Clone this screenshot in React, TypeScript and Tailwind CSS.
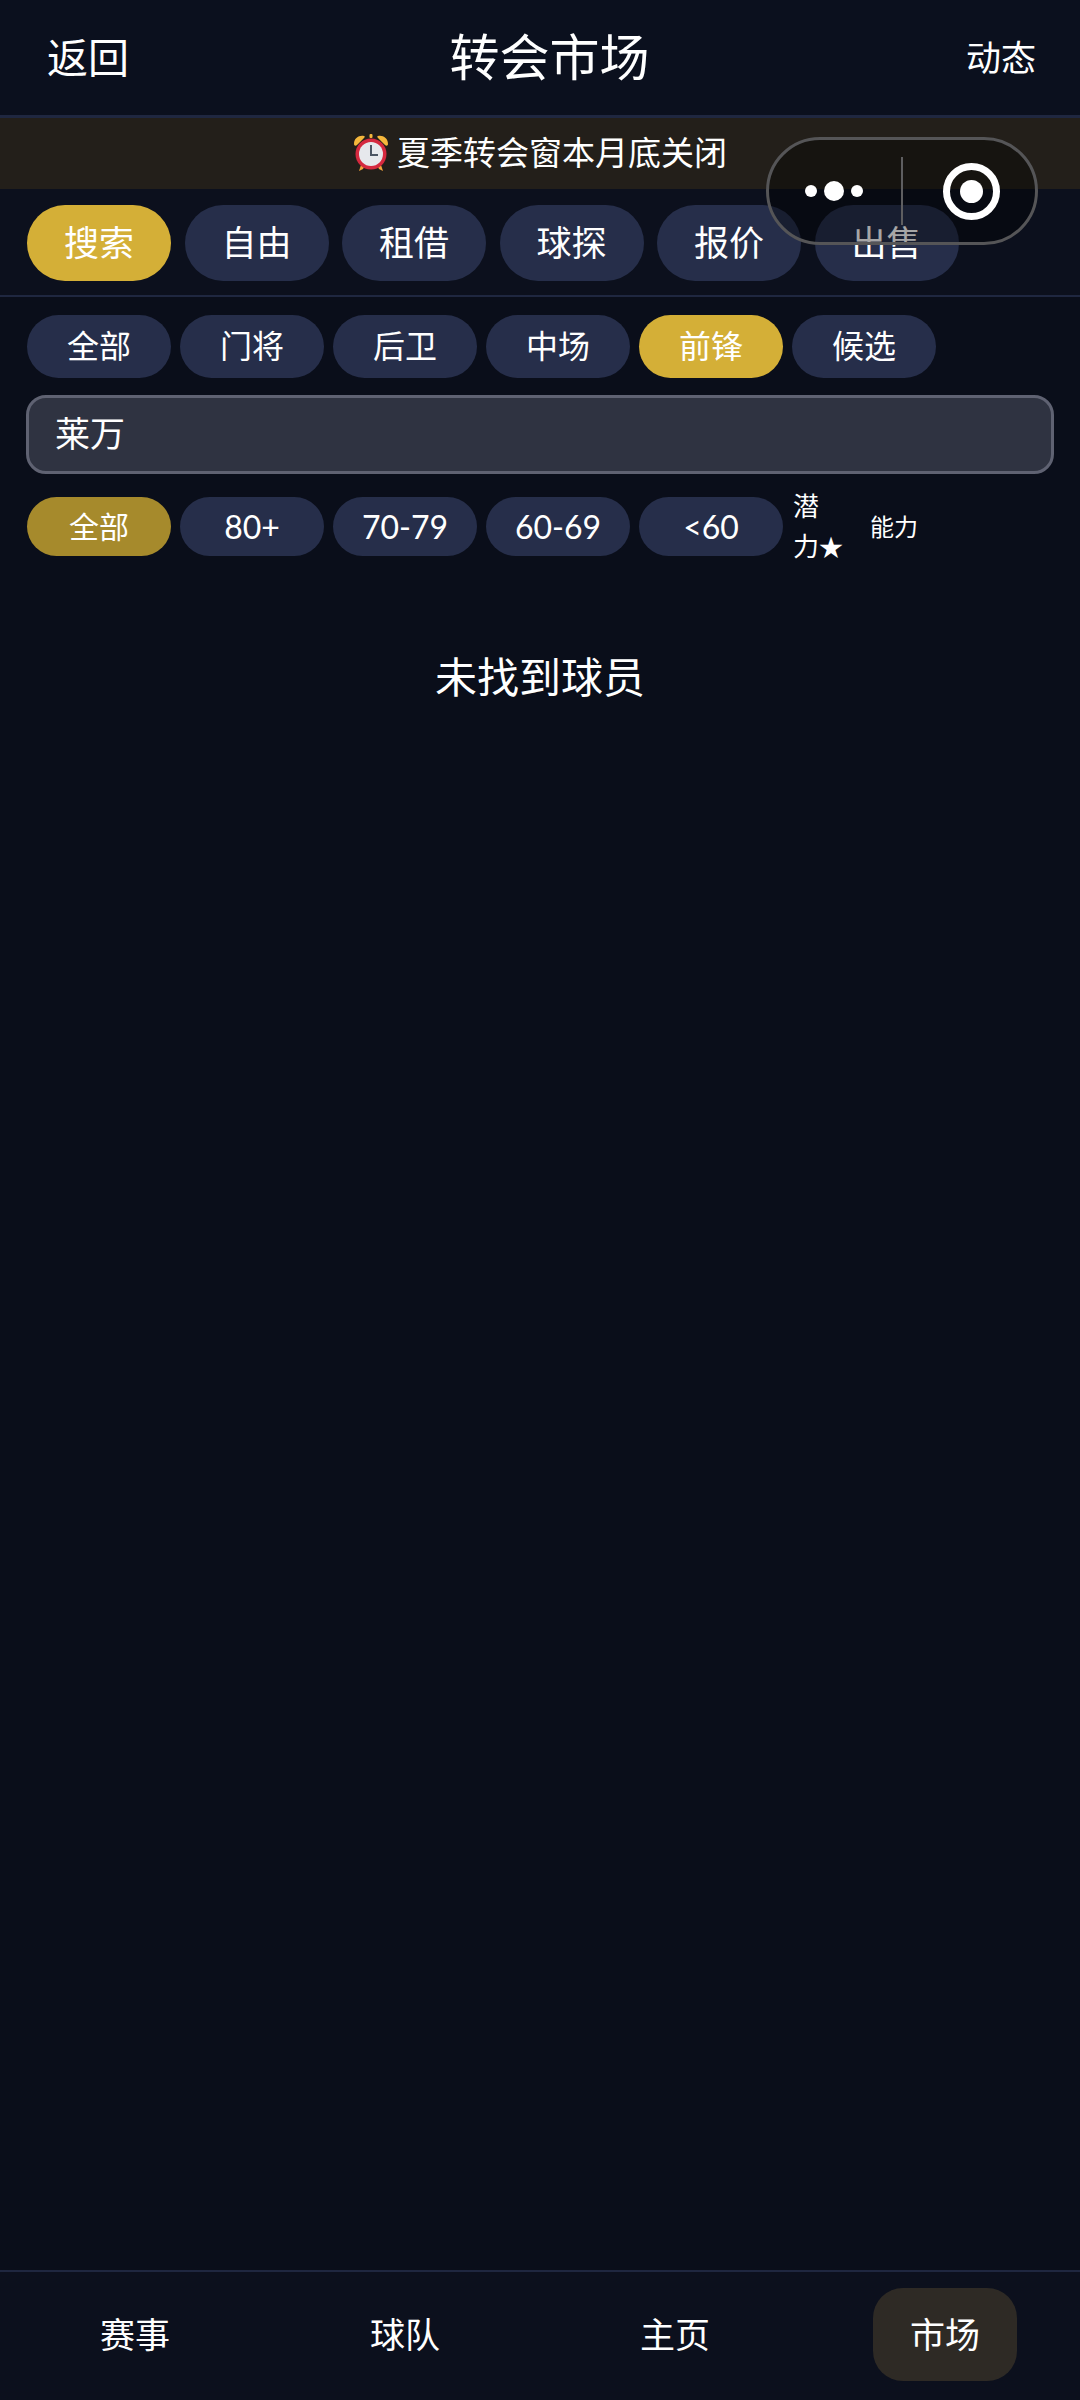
const tabs = ["搜索", "自由", "租借", "球探", "报价", "出售"];
const positions = ["全部", "门将", "后卫", "中场", "前锋", "候选"];
const ratings = ["全部", "80+", "70-79", "60-69", "<60"];
const navItems = ["赛事", "球队", "主页", "市场"];

function AlarmClock() {
  return (
    <svg width="36" height="38" viewBox="0 0 36 38" className="shrink-0">
      <path d="M1 10 C1 4 6 1 11 2 C12 2 12 3 11 4 L4 11 C3 12 1 12 1 10 Z" fill="#f5b73c" />
      <path d="M35 10 C35 4 30 1 25 2 C24 2 24 3 25 4 L32 11 C33 12 35 12 35 10 Z" fill="#f5b73c" />
      <rect x="16.5" y="0" width="3" height="4" rx="1" fill="#f5b73c" />
      <path d="M8 31 L6 37 L10 35 L11 33 Z" fill="#f5a53c" />
      <path d="M28 31 L30 37 L26 35 L25 33 Z" fill="#f5a53c" />
      <circle cx="18" cy="20" r="15.5" fill="#d5293f" />
      <circle cx="18" cy="20" r="12" fill="#e6e8ec" />
      <path d="M18 11 V21 H25" stroke="#4b5563" strokeWidth="2" fill="none" />
    </svg>
  );
}

function Capsule() {
  return (
    <div className="absolute left-[766px] top-[137px] w-[272px] h-[108px] rounded-[54px] border-[3px] border-[#555557] bg-black/35 flex items-center">
      <div className="w-[132px] flex items-center justify-center gap-[7px] pr-[2px]">
        <span className="size-[12px] rounded-full bg-white" />
        <span className="size-[20px] rounded-full bg-white" />
        <span className="size-[12px] rounded-full bg-white" />
      </div>
      <div className="w-[2px] h-[68px] bg-[#5e5e60]" />
      <div className="flex-1 flex items-center justify-center pl-[4px]">
        <div className="size-[57px] rounded-full border-[7px] border-white flex items-center justify-center">
          <span className="size-[23px] rounded-full bg-white" />
        </div>
      </div>
    </div>
  );
}

export default function App() {
  return (
    <div
      className="relative w-[1080px] h-[2400px] flex flex-col bg-[#0a0e1a] text-white overflow-hidden"
      style={{ fontFamily: '"Lato", "Noto Sans CJK SC", sans-serif' }}
    >
      <header className="h-[118px] shrink-0 flex items-center justify-between pl-[47px] pr-[44px] bg-[#0b101e] border-b-[3px] border-[#1f2740]">
        <span className="text-[41px] w-[156px]">返回</span>
        <span className="text-[50px]">转会市场</span>
        <span className="text-[35px] w-[140px] text-right">动态</span>
      </header>

      <div className="h-[71px] shrink-0 flex items-center justify-center gap-[8px] pb-[1px] bg-[#231f1a]">
        <AlarmClock />
        <span className="text-[33px]">夏季转会窗本月底关闭</span>
      </div>

      <div className="shrink-0 flex gap-[13.5px] px-[27px] pt-[16px] pb-[14px] bg-[#0c101d] border-b-[2px] border-[#1f2740]">
        {tabs.map((t, i) => (
          <div
            key={t}
            className={`w-[144px] h-[76px] rounded-[38px] flex items-center justify-center pb-[2px] text-[35px] ${
              i === 0 ? "bg-[#d4af37]" : "bg-[#262e4a]"
            }`}
          >
            {t}
          </div>
        ))}
      </div>

      <div className="shrink-0 flex gap-[9px] px-[27px] mt-[18px]">
        {positions.map((p) => (
          <div
            key={p}
            className={`w-[144px] h-[63px] rounded-[32px] flex items-center justify-center pb-[2px] text-[32px] ${
              p === "前锋" ? "bg-[#d4af37]" : "bg-[#262e4a]"
            }`}
          >
            {p}
          </div>
        ))}
      </div>

      <div className="shrink-0 mx-[26px] mt-[17px] h-[79px] flex items-center pl-[26px] pb-[2px] rounded-[20px] border-[3px] border-[#5f6272] bg-[#2f3341] text-[35px]">
        莱万
      </div>

      <div className="shrink-0 h-[59px] flex items-center gap-[9px] px-[27px] mt-[23px]">
        {ratings.map((r, i) => (
          <div
            key={r}
            className={`w-[144px] h-[59px] rounded-[30px] flex items-center justify-center ${
              i === 0 ? "bg-[#a68a2c] text-[30px]" : "bg-[#262e4a] text-[32px]"
            }`}
          >
            {r}
          </div>
        ))}
        <div className="w-[60px] ml-[1px] text-[26px] leading-[40px] shrink-0">
          潜
          <br />
          力<span className="text-[24px]">★</span>
        </div>
        <div className="ml-[8px] text-[24px]">能力</div>
      </div>

      <main className="flex-1 pt-[90px] text-center text-[42px]">未找到球员</main>

      <nav className="shrink-0 h-[130px] grid grid-cols-4 items-start pt-[16px] bg-[#0c101d] border-t-[2px] border-[#1f2740]">
        {navItems.map((n) => (
          <div key={n} className="flex justify-center">
            <div
              className={`w-[144px] h-[93px] rounded-[30px] flex items-center justify-center text-[35px] ${
                n === "市场" ? "bg-[#2e2a25]" : ""
              }`}
            >
              {n}
            </div>
          </div>
        ))}
      </nav>

      <Capsule />
    </div>
  );
}
